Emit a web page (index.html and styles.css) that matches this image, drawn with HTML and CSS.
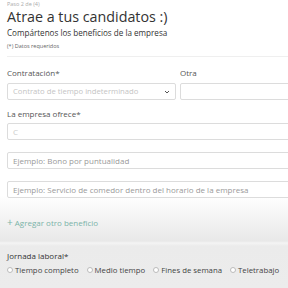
FILE: index.html
```html
<!DOCTYPE html>
<html lang="es">
<head>
    <meta charset="UTF-8">
    <title>Paso 2 de (4)</title>
    <link rel="stylesheet" href="styles.css">
</head>
<body>
<div class="page">
    <div class="intro">
        <p class="step">Paso 2 de (4)</p>
        <h1>Atrae a tus candidatos :)</h1>
        <h2>Compártenos los beneficios de la empresa</h2>
        <p class="req">(*) Datos requeridos</p>
    </div>

    <div class="fields">
        <div class="row">
            <div class="col col-main">
                <label>Contratación*</label>
                <div class="select">
                    <span>Contrato de tiempo indeterminado</span>
                    <svg width="6" height="4" viewBox="0 0 6 4"><path d="M1 1l2 2 2-2" fill="none" stroke="#555" stroke-width="1"/></svg>
                </div>
            </div>
            <div class="col col-other">
                <label>Otra</label>
                <div class="input"></div>
            </div>
        </div>

        <label>La empresa ofrece*</label>
        <div class="list">
            <div class="input">C</div>
            <div class="input">Ejemplo: Bono por puntualidad</div>
            <div class="input">Ejemplo: Servicio de comedor dentro del horario de la empresa</div>
        </div>
        <a class="add" href="#"><span class="plus">+</span> Agregar otro beneficio</a>
    </div>

    <div class="jornada">
        <label>Jornada laboral*</label>
        <div class="radios">
            <span class="radio"><i></i>Tiempo completo</span>
            <span class="radio"><i></i>Medio tiempo</span>
            <span class="radio"><i></i>Fines de semana</span>
            <span class="radio"><i></i>Teletrabajo</span>
        </div>
    </div>
</div>
</body>
</html>
```

FILE: styles.css
```css
* {
    margin: 0;
    padding: 0;
    box-sizing: border-box;
}

body{
    width: 288px;
    height: 288px;
    overflow: hidden;
    font-family: "Open Sans", "DejaVu Sans", sans-serif;
    color: #444;
    background: linear-gradient(#fff 195px, #e8e8e8 241px, #f4f4f4 243px, #ebebeb 246px, #ececec);
}
.page{
    width: 288px;
    overflow: hidden;
    padding: 0 0 0 7px;
}

.intro{
    padding-top: 1px;
    height: 57px;
    border-bottom: 1px solid #efefef;
}
.step{
    font-size: 5.5px;
    color: #aaa;
    line-height: 7px;
}
h1{
    font-size: 14.3px;
    font-weight: 500;
    color: #333;
    line-height: 17px;
    margin-top: 0;
}
h2{
    font-size: 8.1px;
    font-weight: 500;
    color: #333;
    line-height: 12px;
    margin-top: 2px;
}
.req{
    font-size: 5.5px;
    color: #666;
    line-height: 8px;
    margin-top: 3px;
}

label{
    display: block;
    font-size: 8px;
    color: #555;
    line-height: 10px;
}

.fields{
    padding-top: 11px;
}
.row{
    display: flex;
    gap: 4px;
}
.col-main{
    width: 169px;
}
.col-other{
    flex: 1;
    margin-right: -12px;
}
.row label{
    margin-bottom: 5px;
}

.select, .input{
    height: 17px;
    border: 1px solid #dcdcdc;
    border-radius: 2px;
    background: #fff;
    font-size: 8px;
    color: #999;
    line-height: 15px;
    padding: 0 5px;
    white-space: nowrap;
    overflow: hidden;
}
.select{
    display: flex;
    align-items: center;
    justify-content: space-between;
    color: #c4c4c4;
    font-size: 7.7px;
}

.fields > label{
    margin-top: 9px;
    margin-bottom: 4px;
}
.list{
    display: flex;
    flex-direction: column;
    gap: 12px;
    margin-right: -12px;
}
.list .input:first-child{
    color: #ccc;
}

.add{
    display: block;
    margin-top: 19px;
    font-size: 8px;
    color: #7bb3a8;
    text-decoration: none;
    line-height: 10px;
}
.plus{
    font-size: 10px;
}

.jornada{
    padding-top: 23px;
}
.jornada label{
    color: #333;
    margin-bottom: 4px;
}
.radios{
    display: flex;
    gap: 8px;
    font-size: 7.8px;
    color: #444;
    line-height: 10px;
}
.radio{
    display: flex;
    align-items: center;
    gap: 2px;
    white-space: nowrap;
}
.radio i{
    width: 6px;
    height: 6px;
    border: 1px solid #bbb;
    border-radius: 50%;
    background: #fff;
}
```
